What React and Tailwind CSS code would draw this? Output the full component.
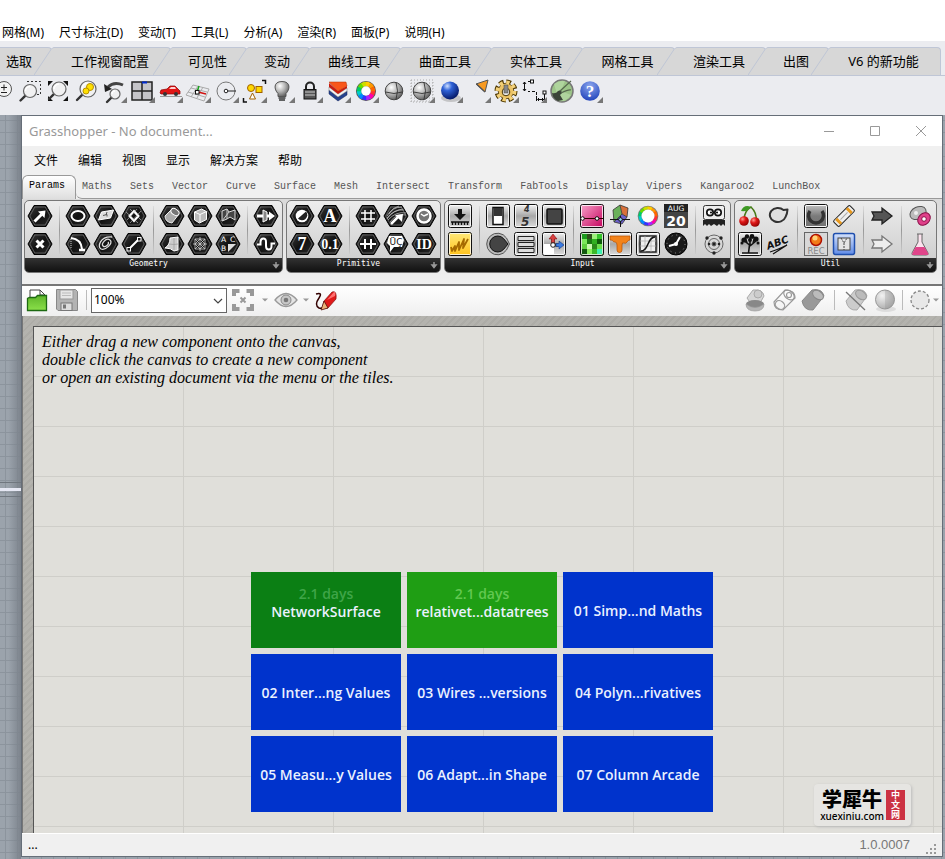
import React from "react";

const UI = "font-['Noto_Sans','Noto_Sans_CJK_SC',sans-serif]";

/* Gradients shared by the icon drawings. */
function Gradients() {
  return (
    <svg className="block h-0 w-0" aria-hidden="true">
      <defs>
        <linearGradient id="steel" x1="0" y1="0" x2="0" y2="1">
          <stop offset="0" stopColor="#f4f4f4" />
          <stop offset="0.5" stopColor="#a8a8a8" />
          <stop offset="1" stopColor="#dedede" />
        </linearGradient>
        <linearGradient id="dark" x1="0" y1="0" x2="0" y2="1">
          <stop offset="0" stopColor="#8a8a8a" />
          <stop offset="1" stopColor="#111" />
        </linearGradient>
        <linearGradient id="hex" x1="0" y1="0" x2="1" y2="1">
          <stop offset="0" stopColor="#3c3c3c" />
          <stop offset="0.5" stopColor="#111" />
          <stop offset="1" stopColor="#2c2c2c" />
        </linearGradient>
        <linearGradient id="pink" x1="0" y1="0" x2="1" y2="1">
          <stop offset="0" stopColor="#f9a4cb" />
          <stop offset="1" stopColor="#c4005c" />
        </linearGradient>
        <linearGradient id="yellow" x1="0" y1="0" x2="0" y2="1">
          <stop offset="0" stopColor="#ffe97a" />
          <stop offset="1" stopColor="#ffc21c" />
        </linearGradient>
        <linearGradient id="sky" x1="0" y1="0" x2="0" y2="1">
          <stop offset="0" stopColor="#d5e2fb" />
          <stop offset="1" stopColor="#5f8be8" />
        </linearGradient>
        <linearGradient id="green" x1="0" y1="0" x2="0" y2="1">
          <stop offset="0" stopColor="#5fb62b" />
          <stop offset="1" stopColor="#8be04a" />
        </linearGradient>
        <radialGradient id="ball" cx="0.35" cy="0.3" r="0.75">
          <stop offset="0" stopColor="#fff" />
          <stop offset="0.5" stopColor="#b5b5b5" />
          <stop offset="1" stopColor="#5a5a5a" />
        </radialGradient>
        <radialGradient id="paleBall" cx="0.35" cy="0.3" r="0.8">
          <stop offset="0" stopColor="#f2f2f2" />
          <stop offset="1" stopColor="#a8a8a8" />
        </radialGradient>
        <radialGradient id="blueBall" cx="0.35" cy="0.25" r="0.75">
          <stop offset="0" stopColor="#cfe0ff" />
          <stop offset="0.35" stopColor="#2f62d8" />
          <stop offset="1" stopColor="#061a6a" />
        </radialGradient>
        <radialGradient id="redBall" cx="0.35" cy="0.3" r="0.75">
          <stop offset="0" stopColor="#ff9a90" />
          <stop offset="0.4" stopColor="#e01818" />
          <stop offset="1" stopColor="#8d0000" />
        </radialGradient>
        <radialGradient id="helpBall" cx="0.5" cy="0.25" r="0.8">
          <stop offset="0" stopColor="#8ca6ee" />
          <stop offset="1" stopColor="#1c3fb8" />
        </radialGradient>
      </defs>
    </svg>
  );
}

const wheelColours = ["#f33", "#f0a", "#a2f", "#33f", "#08f", "#0cc", "#0c6", "#6d0", "#cd0", "#fc0", "#f90", "#f60"];

function Wheel({ r, width, ring }) {
  const step = (Math.PI * 2) / 12;
  return (
    <g>
      <circle cx="14" cy="14" r={r + width / 2 + 0.8} fill={ring} />
      {wheelColours.map((c, i) => {
        const a = i * step - 0.03;
        const b = a + step + 0.06;
        return (
          <path
            key={c}
            d={`M${14 + r * Math.cos(a)} ${14 + r * Math.sin(a)}A${r} ${r} 0 0 1 ${14 + r * Math.cos(b)} ${14 + r * Math.sin(b)}`}
            stroke={c}
            strokeWidth={width}
            fill="none"
          />
        );
      })}
      <circle cx="14" cy="14" r={r - width / 2} fill="#fff" />
    </g>
  );
}

function Lens({ x, y, r }) {
  return (
    <g>
      <path d={`M${x - r * 0.7} ${y + r * 0.7}L${x - r - 3} ${y + r + 3}`} stroke="#333" strokeWidth="2.4" strokeLinecap="round" />
      <circle cx={x} cy={y} r={r} fill="#f3f3f3" fillOpacity="0.8" stroke="#666" strokeWidth="1.2" />
      <path d={`M${x - r + 2} ${y}a${r - 2} ${r - 2} 0 0 1 ${r - 2} ${2 - r}`} stroke="#fff" strokeWidth="1.5" fill="none" />
    </g>
  );
}

const shadedSphere = (
  <g>
    <circle cx="14" cy="14" r="8.800" fill="url(#ball)" stroke="#444" />
    <path d="M5.500 15q8.500 3 17 0M16 5.500q3 8 0 17" stroke="#333" strokeWidth="0.900" fill="none" />
  </g>
);

/* Main toolbar: name, drawing, and whether the corner flyout mark is shown. */
const tools = [
  ["Zoom", <g><circle cx="16" cy="12" r="7.500" fill="#f3f3f3" stroke="#555" /><path d="M16 7.500v6M13 10.500h6M13 15.500h6" stroke="#222" /></g>, 0],
  ["Zoom window", <g><path d="M11 4.500h13.500v13h-4" fill="none" stroke="#333" strokeDasharray="2 2" /><Lens x={14} y={14} r={6.5} /></g>, 0],
  ["Zoom extents", <g><path d="M4 4h5l-5 5zM24 4h-5l5 5zM4 24h5l-5-5zM24 24h-5l5-5z" fill="#111" /><Lens x={15} y={12} r={7} /></g>, 0],
  ["Zoom selected", <g><Lens x={16} y={12} r={8} /><circle cx="18" cy="10" r="3.500" fill="#ffe000" stroke="#b89000" /><circle cx="14" cy="14" r="3" fill="#ffe000" stroke="#b89000" /></g>, 0],
  ["Undo view", <g><Lens x={15} y={17} r={5} /><path d="M8 10q6-6 15-2" fill="none" stroke="#444" strokeWidth="3" /><path d="M4 7l1 8 7-3z" fill="#222" /></g>, 1],
  ["Four viewports", <g><rect x="4" y="5" width="20" height="18" fill="#c4c4c8" stroke="#222" strokeWidth="1.500" /><path d="M14 5v18M4 14h20" stroke="#222" strokeWidth="1.500" /><path d="M14 5.500h5" stroke="#002bd0" strokeWidth="2" /></g>, 1],
  ["Right view", <g><path d="M4 19.500h22" stroke="#999" /><path d="M4 16l1-3 6-1 3-3h5l3 3 2 2v3H5z" fill="#e01515" stroke="#8a0000" strokeWidth="0.700" /><path d="M13 12l2-2h4l1 2z" fill="#ffd0d0" /><circle cx="9" cy="17" r="2" fill="#333" /><circle cx="20" cy="17" r="2" fill="#333" /></g>, 1],
  ["Construction plane", <g><path d="M2 18L9 8l16 4-5 12zM4 15l17 5M7 11l16 4M7 20L14 9M13 21l6-11" fill="none" stroke="#aaa" /><path d="M13 15l2-6" stroke="#16a01a" strokeWidth="1.500" /><path d="M14 15l8 2" stroke="#d01010" strokeWidth="1.500" /><rect x="11.500" y="13.500" width="3.500" height="3.500" fill="#fff" stroke="#111" /></g>, 1],
  ["Object snap", <g><circle cx="14" cy="14" r="9" fill="none" stroke="#777" /><path d="M14 14h10" stroke="#222" /><circle cx="14" cy="14" r="1.800" fill="#fff" stroke="#222" /></g>, 1],
  ["Select", <g><circle cx="11" cy="11" r="3.500" fill="#ffd800" stroke="#a06000" /><rect x="16" y="9.500" width="6" height="6" fill="#ffd800" stroke="#a06000" /><path d="M9.500 22l3-6 3 6z" fill="#fff" stroke="#a06000" /><path d="M22 3.500h3.500V7M3.500 21v4H7" fill="none" stroke="#111" strokeWidth="1.500" /></g>, 1],
  ["Hide", <g><path d="M14 4.500c-9 0-8 8-4 12v3h8v-3c4-4 5-12-4-12z" fill="url(#ball)" stroke="#555" /><path d="M10.500 21h7M11 23h6" stroke="#333" strokeWidth="1.500" /></g>, 1],
  ["Lock", <g><path d="M10 13V9.500a4 4 0 0 1 8 0V13" fill="none" stroke="#222" strokeWidth="2" /><rect x="8" y="12.500" width="12" height="9.500" fill="#555" stroke="#111" /><path d="M9 15h10M9 18h10" stroke="#ccc" /></g>, 1],
  ["Layers", <g><path d="M5 13l9 7 9-6v4l-9 6-9-7z" fill="#26428f" stroke="#132456" strokeWidth="0.500" /><path d="M5 10l9 7 9-6v3l-9 6-9-7z" fill="#f4f4f4" stroke="#777" strokeWidth="0.500" /><path d="M5 6l9 8 9-5v2l-9 6-9-7z" fill="#c81c10" /><path d="M5 5L22 5 23 9 14 14z" fill="#f9561a" stroke="#b03000" strokeWidth="0.500" /></g>, 1],
  ["Colour", <Wheel r={7} width={4.5} ring="#555" />, 1],
  ["Shade", shadedSphere, 0],
  ["Ghosted", <g><path d="M3 3h22v22H3zM3 6h22M3 9h22M3 12h22M3 15h22M3 18h22M3 21h22M3 24h22" fill="none" stroke="#aaa" strokeDasharray="1 2" />{shadedSphere}</g>, 1],
  ["Render", <g><ellipse cx="15" cy="21" rx="10" ry="4" fill="#aaa" opacity="0.600" /><circle cx="14" cy="13.500" r="9" fill="url(#blueBall)" /></g>, 1],
  ["Spotlight", <g><path d="M12 7l12-4-3 12z" fill="#f79a22" stroke="#555" /><path d="M12.500 7l8.500 8" stroke="#555" strokeWidth="1.300" /></g>, 1],
  ["Options", <g><circle cx="14" cy="14" r="9" fill="none" stroke="#4b3500" strokeWidth="5" strokeDasharray="4.500 2.570" /><circle cx="14" cy="14" r="7.800" fill="#ecc365" stroke="#4b3500" strokeWidth="0.800" /><circle cx="14" cy="14" r="8.600" fill="none" stroke="#f3d078" strokeWidth="3.800" strokeDasharray="3.300 3.450" /><circle cx="14" cy="14" r="6.500" fill="#ecc365" /><circle cx="14" cy="15" r="3.800" fill="#eee" stroke="#4b3500" /><path d="M12 8h4v8h-4z" fill="#888" stroke="#444" strokeWidth="0.500" /></g>, 1],
  ["Dimension", <g fill="none" stroke="#111"><path d="M8 4.500h3M4.500 5v9M3 7l1.500-2L6 7M3 12l1.500 2L6 12M8 14.500h2M12 14.500h3M16.500 15v3M16.500 19v5M18 22.500h6M19 21l-1.500 1.500L19 24M22 21l1.500 1.500L22 24M24.500 17v7" /><rect x="10.500" y="3" width="3" height="3" fill="#fff" /><rect x="23" y="14" width="3" height="3" fill="#fff" /></g>, 1],
  ["Grasshopper", <g><circle cx="14" cy="14" r="11" fill="#9cc488" stroke="#777" strokeWidth="1.500" /><path d="M6 7q5-4 11-3l-4 10 10 4q-5 7-12 6z" fill="#b8dca6" opacity="0.700" /><path d="M4 16q4 1 6-2l3-1 1 3-2 2 3 5-5 1q-5-2-6-8z" fill="#3b4438" /><path d="M12 14L23 4M13 16q8-4 10-3" stroke="#56684d" strokeWidth="1.200" fill="none" /></g>, 0],
  ["Help", <g><circle cx="14" cy="14" r="9.800" fill="url(#helpBall)" /><text x="14" y="20" textAnchor="middle" fontSize="17" fontWeight="700" fontFamily="Liberation Serif" fill="#fff">?</text></g>, 1],
];

function Hex({ children }) {
  return (
    <g>
      <path d="M2 14L8 3.500h12L26 14l-6 10.500H8z" fill="url(#hex)" stroke="#000" />
      <path d="M3.800 14l5-9h10.400l5 9-5 9H8.800z" fill="none" stroke="#777" strokeWidth="0.700" />
      {children}
    </g>
  );
}

function Square({ fill = "url(#steel)", children }) {
  return (
    <g>
      <rect x="2.500" y="2.500" width="23" height="23" rx="2" fill={fill} stroke="#111" />
      <rect x="3.500" y="3.500" width="21" height="21" rx="1" fill="none" stroke="#fff" opacity="0.800" />
      {children}
    </g>
  );
}

const w = { fill: "none", stroke: "#fff", strokeWidth: 2 };
const thin = { fill: "none", stroke: "#ccc", strokeWidth: 1 };
const glyph = { textAnchor: "middle", fill: "#fff", fontWeight: 700, fontFamily: "Liberation Serif" };

const pixels = ["#1c9a1c", "#2f4f1a", "#9cf07a", "#35c22a", "#7be85a", "#1a7a12", "#30b020", "#0f5a0a", "#5fd040", "#c8f8b0", "#2a8a1a", "#6be04c", "#145a10", "#8cf060", "#3cb82a", "#3ef0b0"];

const panels = [
  {
    name: "Geometry",
    columns: [
      [["Point", <Hex><path d="M8.500 19.500l7-7" {...w} strokeWidth="3" /><path d="M12 9.500l7.500-1-1 7.500z" fill="#fff" /></Hex>],
       ["Cross", <Hex><path d="M10.500 10.500l7 7M17.500 10.500l-7 7" {...w} strokeWidth="3" /></Hex>]],
      null,
      [["Circle", <Hex><ellipse cx="14" cy="14" rx="6.500" ry="5" {...w} /></Hex>],
       ["Arc", <Hex><path d="M7 8q10 1 11 11" {...w} /><path d="M15 20h6" {...w} strokeWidth="2.500" /><path d="M7 9v10" {...thin} strokeDasharray="1 1" /></Hex>]],
      [["Plane", <Hex><path d="M6.500 18l3-8 12-2-3 8z" fill="#ddd" stroke="#fff" /><path d="M11 13.500l4-1v2M15 10l-1 3" stroke="#555" fill="none" /></Hex>],
       ["Curve", <Hex><path d="M20 7C8 6 5 17 9 19s13-6 9-9-9 4-7 6 7-2 5-4" fill="none" stroke="#ddd" strokeWidth="1.300" /></Hex>]],
      [["Rectangle", <Hex><path d="M9.500 14l4.500-5 4.500 5-4.500 5z" {...w} /><path d="M6 10l12 11M10 21L21 9M10 7l11 11M7 18L17 7" {...thin} strokeWidth="0.600" /></Hex>],
       ["Line", <Hex><path d="M9 19L19 9" {...w} /><rect x="7" y="17.500" width="3.500" height="3.500" fill="#222" stroke="#fff" /><rect x="17.500" y="7.500" width="3.500" height="3.500" fill="#222" stroke="#fff" /></Hex>]],
      null,
      [["Brep", <Hex><path d="M7 14l7-7 7 5-7 9q-7-1-7-7z" fill="#aaa" stroke="#eee" /><ellipse cx="17" cy="10" rx="4.500" ry="3" transform="rotate(35 17 10)" fill="#777" stroke="#fff" /></Hex>],
       ["Surface", <Hex><path d="M7 18q5-3 5-10l8-1v13l-4 1q-3-3-9-3z" fill="#ccc" stroke="#fff" /><path d="M11 14q5 1 9 0M16 8v12" stroke="#999" strokeWidth="0.700" fill="none" /></Hex>]],
      [["Box", <Hex><path d="M8.500 10l7-3 5 2.500v8l-7 3.500-5-3z" fill="#bbb" stroke="#fff" /><path d="M8.500 10l5.500 2.500v8M14 12.500l6.500-3" stroke="#fff" fill="none" /></Hex>],
       ["Mesh", <Hex><path d="M9 9h10v10H9zM14 7v14M7 14h14M9 9l10 10M19 9L9 19M14 9l5 5-5 5-5-5z" {...thin} strokeWidth="0.800" /></Hex>]],
      [["Twisted box", <Hex><path d="M8 19V9l5-2 2 3 6-2v10l-5-3-3 2z" fill="#444" stroke="#ddd" /><path d="M13 7v10M8 19l7-9" {...thin} /></Hex>],
       ["Group", <Hex><g fontSize="7.500" fontFamily="DejaVu Sans" fill="#fff"><text x="7" y="12">A</text><text x="16" y="12">C</text><text x="7" y="21">B</text></g><path d="M14 14h8l-8 8z" fill="#ddd" /></Hex>]],
      null,
      [["Transform", <Hex><path d="M5 14h14" {...w} strokeWidth="3" /><path d="M17 9.500l6 4.500-6 4.500z" fill="#fff" /><path d="M11 8v12l4-2V10z" fill="#888" stroke="#fff" /></Hex>],
       ["Field", <Hex><path d="M5 14.500h3.500V12q0-3.500 2.800-3.500T14 12v4q0 3.500 2.800 3.500T19.500 16v-2.500H23" {...w} /></Hex>]],
    ],
  },
  {
    name: "Primitive",
    columns: [
      [["Boolean", <Hex><circle cx="14" cy="14" r="6.300" fill="#fff" /><path d="M18 9.500a5 5 0 0 1-8 7z" fill="#222" /></Hex>],
       ["Integer", <Hex><text x="14" y="20" fontSize="18" {...glyph}>7</text></Hex>]],
      [["Text", <Hex><text x="14" y="20" fontSize="18" {...glyph}>A</text></Hex>],
       ["Number", <Hex><text x="14" y="19" fontSize="14" {...glyph}>0.1</text></Hex>]],
      null,
      [["Domain", <Hex><path d="M11 8v12M17 8v12M7 11h14M7 17h14" {...w} strokeWidth="1.500" /></Hex>],
       ["Range", <Hex><path d="M6 14h16M11 9v10M17 9v10" {...w} /></Hex>]],
      [["Vector", <Hex><path d="M5 14q5-9 15-9M5 16q7-9 17-8M6 18q8-9 18-7M7 12q4-7 10-8M5 17q6-9 16-10M8 20q6-9 16-7" {...thin} strokeWidth="0.700" /><path d="M9 22l8-8" {...w} strokeWidth="2.500" /><path d="M13 13l8-1-1 8z" fill="#fff" /></Hex>],
       ["Culture", <Hex><path d="M7 6h13l2 4-2 7h-8l-4 5v-6l-3-3z" fill="#fff" /><text x="14" y="15" textAnchor="middle" fontSize="9" fontFamily="DejaVu Sans" fill="#111">ÜÇ</text></Hex>]],
      [["Time", <Hex><circle cx="14" cy="14" r="6.500" fill="#777" stroke="#fff" strokeWidth="2.500" /><path d="M11 12l3 2 4-2" {...w} strokeWidth="1.500" /></Hex>],
       ["Identifier", <Hex><text x="14" y="19" fontSize="14" {...glyph}>ID</text></Hex>]],
    ],
  },
  {
    name: "Input",
    columns: [
      [["Bake", <Square><path d="M12 7h4v5h4l-6 6-6-6h4z" fill="#111" /><path d="M5 20h18M6.500 20v3M9.500 20v3M12.500 20v3M15.500 20v3M18.500 20v3M21.500 20v3" stroke="#111" strokeWidth="1.500" /></Square>],
       ["Graph", <Square fill="url(#yellow)"><path d="M5 17l1 4 3-5 0 5 4-9 0 8 5-11-1 9 5-9" fill="none" stroke="#a66a00" strokeWidth="1.800" strokeLinejoin="round" /></Square>]],
      null,
      [["Toggle", <Square><rect x="9" y="5.500" width="10" height="17" fill="#fff" stroke="#111" strokeWidth="1.500" /><rect x="10" y="6" width="8" height="8" fill="#333" /></Square>],
       ["Knob", <g><path d="M25.500 14l-3-6a10.800 10.800 0 1 0 0 12z" fill="#bbb" stroke="#555" /><path d="M24 14l-4.500-5.500a8 8 0 1 0 0 11z" fill="#444" stroke="#111" /></g>]],
      [["Digit scroller", <Square><g fill="#333" fontFamily="DejaVu Sans" fontWeight="700" fontStyle="italic"><text x="12" y="10" fontSize="8">4</text><text x="9" y="24" fontSize="12">5</text></g></Square>],
       ["Value list", <Square><path d="M6 6.500h16v4H6zM6 12.500h16v4H6zM6 18.500h16v4H6z" fill="#ddd" stroke="#222" /></Square>]],
      [["Button", <Square><rect x="7" y="7" width="15" height="15" rx="1" fill="#444" stroke="#111" strokeWidth="1.500" /></Square>],
       ["Control", <Square><path d="M4 14h10v10H4z" fill="#fff" /><path d="M13 13V9M13 15h5" stroke="#333" strokeWidth="3" /><path d="M9 9l4-5 4 5h-2.500v4h-3V9z" fill="#d84040" stroke="#700" strokeWidth="0.500" /><path d="M16 13.500h3V11l5 4-5 4v-2.500h-3z" fill="#3d7ce0" stroke="#00277a" strokeWidth="0.500" /><circle cx="13" cy="15" r="2.300" fill="#fff" stroke="#222" /></Square>]],
      null,
      [["Gradient", <Square fill="url(#pink)"><path d="M3 16.500h22" stroke="#300" /><circle cx="4.500" cy="16.500" r="1.800" fill="#fff" stroke="#111" /><circle cx="19" cy="16.500" r="1.800" fill="#fff" stroke="#111" /></Square>],
       ["Image sampler", <Square fill="#2a8a1a">{pixels.map((c, i) => <rect key={i} x={4 + (i % 4) * 5} y={4 + Math.floor(i / 4) * 5} width="5" height="5" fill={c} />)}</Square>]],
      [["Colour swatch", <g><path d="M7 8l7-5 2 9-8 8z" fill="#6ab05a" /><path d="M14 3l8 3-1 9-5-3z" fill="#d8703a" /><path d="M8 20l8-8 5 3-5 7z" fill="#6a60c8" /><path d="M7 8l7-5 8 3-1 9-5 7-8-2zM14 3l2 9-8 8M16 12l5 3" stroke="#333" strokeWidth="0.800" fill="none" /><path d="M4 17.500h20M14.500 14v11" stroke="#111" /><circle cx="14.500" cy="17.500" r="1.800" fill="#9df" stroke="#111" /></g>],
       ["Paint", <Square><path d="M4 6h20v4q-2 0-3 2t-3 1-2 2v5a2.500 2.500 0 0 1-5 0v-5q0-3-2-3t-2-1-3-1z" fill="#f2831b" stroke="#b85200" strokeWidth="0.700" /></Square>]],
      [["Colour wheel", <Wheel r={8} width={3} ring="#777" />],
       ["Graph mapper", <Square><rect x="6" y="6" width="16" height="16" fill="#eee" stroke="#222" strokeWidth="1.500" /><path d="M6 11h16M6 16h16M11 6v16M17 6v16" stroke="#aaa" strokeWidth="0.700" /><path d="M7 21c8 0 6-14 14-14" fill="none" stroke="#111" strokeWidth="1.500" /></Square>]],
      [["Calendar", <g><rect x="2" y="2" width="24" height="24" fill="#222" /><rect x="2" y="10" width="24" height="16" fill="#444" /><g textAnchor="middle" fill="#fff" fontFamily="DejaVu Sans"><text x="14" y="9" fontSize="7.500">AUG</text><text x="14" y="23.500" fontSize="14" fontWeight="700">20</text></g></g>],
       ["Clock", <g><circle cx="14" cy="14" r="11" fill="#1a1a1a" stroke="#000" /><circle cx="14" cy="14" r="9" fill="none" stroke="#999" strokeDasharray="1 3.710" /><path d="M14 14l4-7M14 14l-7 2" {...w} /><circle cx="14" cy="14" r="2" fill="#fff" /></g>]],
      null,
      [["File", <g><rect x="3.500" y="3.500" width="21" height="14" rx="2" fill="#eee" stroke="#333" /><circle cx="10" cy="10.500" r="3.200" fill="#fff" stroke="#111" strokeWidth="1.700" /><circle cx="18" cy="10.500" r="3.200" fill="#fff" stroke="#111" strokeWidth="1.700" /><circle cx="11" cy="10.500" r="1" /><circle cx="17" cy="10.500" r="1" /><path d="M3 18h22v6l-2-2-2 2-2-2-2 2-3-2-3 2-2-2-2 2-2-2-2 2z" fill="#222" /></g>],
       ["Atom", <g fill="none" stroke="#666"><circle cx="14" cy="14" r="9" /><circle cx="14" cy="14" r="5.500" /><circle cx="14" cy="14" r="2" fill="#222" /><g fill="#222" stroke="none"><circle cx="7" cy="8" r="1.700" /><circle cx="21" cy="8" r="1.700" /><circle cx="14" cy="23" r="1.700" /><circle cx="9" cy="14" r="1.300" /><circle cx="19" cy="14" r="1.300" /></g></g>]],
    ],
  },
  {
    name: "Util",
    columns: [
      [["Cherry picker", <g><path d="M8 17Q9 8 15 5q6 6 5 13" fill="none" stroke="#4a7a1a" strokeWidth="1.500" /><path d="M15 5q-7-3-10 4 7 1 10-4z" fill="#3f9a25" /><circle cx="8" cy="19" r="4.800" fill="url(#redBall)" /><circle cx="19" cy="20" r="4.800" fill="url(#redBall)" /></g>],
       ["Param viewer", <Square><path d="M12.500 23l1-8-5-4M14 16l6-5M14 15V7M11 13L9 7M17 13l2-6M6 23h16" stroke="#111" strokeWidth="1.600" fill="none" /><g fill="#111"><circle cx="8" cy="10" r="2.600" /><circle cx="11" cy="6.500" r="2.200" /><circle cx="16" cy="6.500" r="2.400" /><circle cx="20" cy="9" r="2.600" /><circle cx="6" cy="13" r="1.500" /><circle cx="22" cy="13" r="1.500" /><circle cx="14" cy="10" r="2" /></g></Square>]],
      [["Data dam", <g><path d="M23.500 7.500l-4 .5A8 7 0 1 0 21.500 15q1.800-3 2-7.500z" fill="#e0e0e0" stroke="#333" strokeWidth="2" strokeLinejoin="round" /></g>],
       ["Scribble", <g><text x="14" y="16" textAnchor="middle" fontSize="10" fontWeight="700" fontStyle="italic" fontFamily="DejaVu Sans" fill="#111" transform="rotate(-20 14 14)">ABC</text><path d="M6 22q7-2 17-7l-14 9" stroke="#111" strokeWidth="1.300" fill="none" /></g>]],
      null,
      [["Relay", <Square><rect x="4" y="4" width="20" height="20" fill="url(#dark)" opacity="0.500" /><path d="M8 9a7.500 7.500 0 1 0 12 0" fill="none" stroke="#333" strokeWidth="3.500" /></Square>],
       ["Record", <g><rect x="2.500" y="2.500" width="23" height="23" fill="#d8d8d8" stroke="#666" /><circle cx="14" cy="10" r="5.500" fill="#f27a18" stroke="#b01000" strokeWidth="1.500" /><circle cx="13" cy="8" r="2.500" fill="#ffd27a" /><text x="14" y="24" textAnchor="middle" fontSize="8.500" fontFamily="DejaVu Sans" fill="#888">REC</text></g>]],
      [["Jump", <g transform="rotate(45 14 14)"><rect x="10" y="2.500" width="8" height="23" rx="1.500" fill="#eee" stroke="#222" /><path d="M10.500 6.500h7M10.500 21.500h7" stroke="#e89a20" strokeWidth="3" /><path d="M14 9v10" stroke="#aaa" /></g>],
       ["Cluster", <g><rect x="3.500" y="3.500" width="21" height="21" rx="2" fill="url(#sky)" stroke="#1f4fae" strokeWidth="1.500" /><rect x="8" y="8" width="12" height="12" fill="#e4e4e4" stroke="#444" /><path d="M11 8l3 5 3-5M14 13v7" fill="none" stroke="#444" strokeDasharray="2 1" /></g>]],
      null,
      [["Input arrow", <path d="M4 10h10V6l10 8-10 8v-4H4l2-4z" fill="#555" stroke="#222" strokeWidth="1.300" />],
       ["Output arrow", <path d="M4 10h10V6l10 8-10 8v-4H4l2-4z" fill="#eee" stroke="#777" strokeWidth="1.300" />]],
      null,
      [["Fitness", <g><ellipse cx="12" cy="11" rx="8.500" ry="6" transform="rotate(-25 12 11)" fill="#bbb" stroke="#555" /><ellipse cx="18" cy="17" rx="7" ry="5.500" transform="rotate(-45 18 17)" fill="#e0408a" stroke="#8a1148" /><circle cx="18" cy="17" r="2.300" fill="#fff" stroke="#8a1148" /><circle cx="10" cy="11" r="2" fill="#eee" /></g>],
       ["Galapagos", <g><path d="M11 4h6M12 4v8L6 23q-1 2 2 2h12q3 0 2-2l-6-11V4" fill="#fbe3ee" stroke="#666" /><path d="M9.500 17h9l4 7q0 1-2 1h-13q-2 0-1-2z" fill="#e0458a" /></g>]],
    ],
  },
];

function IconButton({ label, children }) {
  return (
    <button type="button" aria-label={label} className="block h-7 w-7 shrink-0">
      <svg viewBox="0 0 28 28" className="block h-7 w-7" aria-hidden="true">{children}</svg>
    </button>
  );
}

function Panel({ panel }) {
  return (
    <section className="shrink-0 overflow-hidden rounded-[5px] border border-[#777] bg-linear-to-b from-[#ececec] to-[#c9c9c9]">
      <div className="flex pt-px pr-0.5 pl-px">
        {panel.columns.map((column, i) =>
          column ? (
            <div key={i} className="flex flex-col">
              {column.map(([label, art]) => <IconButton key={label} label={label}>{art}</IconButton>)}
            </div>
          ) : (
            <div key={i} className="flex w-2.5 justify-center py-1">
              <div className="w-px bg-linear-to-b from-[#ddd] via-[#999] to-[#ccc]" />
            </div>
          )
        )}
      </div>
      <div className="flex h-3.5 items-center bg-linear-to-b from-[#333] to-[#111] pr-0.5 font-['DejaVu_Sans_Mono',monospace] text-[8px] leading-3 text-white">
        <h2 className="flex-1 pb-0.5 text-center">{panel.name}</h2>
        <button type="button" aria-label={`Expand ${panel.name}`} className="h-2 w-2">
          <svg viewBox="0 0 8 8" className="block h-2 w-2"><path d="M4 1v4M2 4h4L4 6.500z" fill="#999" stroke="#999" strokeWidth="1.500" /></svg>
        </button>
      </div>
    </section>
  );
}

const rhinoMenus = ["网格(M)", "尺寸标注(D)", "变动(T)", "工具(L)", "分析(A)", "渲染(R)", "面板(P)", "说明(H)"];
const rhinoTabs = [
  ["工作视窗配置", "w-[117px]"],
  ["可见性", "w-[74px]"],
  ["变动", "w-[61px]"],
  ["曲线工具", "w-[89px]"],
  ["曲面工具", "w-[89px]"],
  ["实体工具", "w-[89px]"],
  ["网格工具", "w-[90px]"],
  ["渲染工具", "w-[89px]"],
  ["出图", "w-[61px]"],
  ["V6 的新功能", "w-[110px]"],
];
const menus = ["文件", "编辑", "视图", "显示", "解决方案", "帮助"];
const categories = ["Maths", "Sets", "Vector", "Curve", "Surface", "Mesh", "Intersect", "Transform", "FabTools", "Display", "Vipers", "Kangaroo2", "LunchBox"];
const tiles = [
  ["NetworkSurface", "2.1 days", "bg-[#0b7f14]", "text-[#3fa548]"],
  ["relativet...datatrees", "2.1 days", "bg-[#1f9e14]", "text-[#62c850]"],
  ["01 Simp...nd Maths"],
  ["02 Inter...ng Values"],
  ["03 Wires ...versions"],
  ["04 Polyn...rivatives"],
  ["05 Measu...y Values"],
  ["06 Adapt...in Shape"],
  ["07 Column Arcade"],
];

function RhinoHeader() {
  return (
    <header className="overflow-hidden bg-[#ebecf0]">
      <nav className="flex h-[41px] items-end gap-[15px] bg-white pl-0.5 text-[12px] leading-4">
        {rhinoMenus.map((m) => <button key={m} type="button" className="shrink-0 whitespace-nowrap">{m}</button>)}
      </nav>
      <div className="flex h-[35px] items-end border-b border-[#bfc6d6] text-[13px] leading-[26px]">
        <button type="button" className="h-7 w-[52px] shrink-0 rounded-tr-[4px] border-t border-r border-[#bfc6d6] bg-[#d7d7d7] pb-px pl-1.5 text-left">选取</button>
        {rhinoTabs.map(([name, width]) => (
          <button key={name} type="button" className="-ml-[18px] flex h-7 shrink-0">
            <svg viewBox="0 0 20 28" className="block h-7 w-5" aria-hidden="true">
              <path d="M0 28L17 2.500Q18.500 0.500 20 0.500V28z" fill="#d7d7d7" />
              <path d="M0 28L17 2.500Q18.500 0.500 20 0.500" fill="none" stroke="#bfc6d6" />
            </svg>
            <span className={`${width} block h-7 rounded-tr-[4px] border-t border-r border-[#bfc6d6] bg-[#d7d7d7] pr-1 text-center whitespace-nowrap`}>{name}</span>
          </button>
        ))}
      </div>
      <div className="-ml-3 flex h-[39px] pt-px">
        {tools.map(([label, art, flyout]) => (
          <IconButton key={label} label={label}>
            {art}
            {flyout ? <path d="M27 20v6h-6z" fill="#777" /> : null}
          </IconButton>
        ))}
      </div>
    </header>
  );
}

function TitleBar() {
  return (
    <div className="flex h-[30px] items-center bg-white pr-1.5 pl-[7px]">
      <h1 className="flex-1 text-[13px] leading-4 text-[#999]">Grasshopper - No document...</h1>
      {[["Minimise", "M9 14.500h10"], ["Maximise", "M9.500 9.500h9v9h-9z"], ["Close", "M9 9l10 10M19 9L9 19"]].map(([label, d]) => (
        <button key={label} type="button" aria-label={label} className="flex w-[46px] justify-center last:-mr-2">
          <svg viewBox="0 0 28 28" className="block h-7 w-7"><path d={d} fill="none" stroke="#999" /></svg>
        </button>
      ))}
    </div>
  );
}

const caret = <svg viewBox="0 0 8 8" className="block h-2 w-2" aria-hidden="true"><path d="M1 2.500h6L4 5.500z" fill="#999" /></svg>;

function CanvasToolbar() {
  return (
    <div className="flex h-8 items-center border-t-2 border-[#777] bg-linear-to-b from-white to-[#efefef] pb-0.5">
      <IconButton label="Open"><path d="M8 11V4h10l5 5v6" fill="#fff" stroke="#444" /><path d="M18 4v5h5" fill="none" stroke="#444" /><path d="M5.500 24.500v-12l2-1h6l2-2h9v15z" fill="url(#green)" stroke="#1d6a12" strokeWidth="1.300" /></IconButton>
      <div className="w-0.5" />
      <IconButton label="Save"><path d="M4.500 3.500h19l2 2v19H6l-1.500-1.500z" fill="#b3b3b3" stroke="#888" /><rect x="8" y="4" width="13" height="9" fill="#e6e6e6" stroke="#999" /><path d="M10 7h9M10 9.500h9" stroke="#bbb" /><rect x="9" y="17" width="11" height="7.500" fill="#ddd" stroke="#777" /><rect x="11" y="18.500" width="3" height="4" fill="#777" /></IconButton>
      <div className="mr-1 ml-1.5 h-5 w-px bg-[#bbb]" />
      <div className="relative h-[25px] w-[136px]">
        <select aria-label="Zoom level" defaultValue="100%" className="block h-[25px] w-full appearance-none border border-[#666] bg-white pl-0.5 text-[12px] text-black">
          <option>100%</option>
        </select>
        <svg viewBox="0 0 10 10" className="pointer-events-none absolute top-2 right-1 h-2.5 w-2.5" aria-hidden="true"><path d="M1 3l4 4 4-4" fill="none" stroke="#444" strokeWidth="1.200" /></svg>
      </div>
      <div className="ml-0.5 flex items-center">
        <IconButton label="Zoom extents"><path d="M5 10V5h5.500M17.500 5H23v5M23 18v5h-5.500M10.500 23H5v-5" fill="none" stroke="#999" strokeWidth="4" /><path d="M11.500 11.500l5 5M16.500 11.500l-5 5" stroke="#999" strokeWidth="2" /></IconButton>
        <button type="button" aria-label="Zoom options" className="ml-1 mr-[3px]">{caret}</button>
        <IconButton label="Preview"><path d="M3 14q11-13 22 0-11 13-22 0z" fill="#e4e4e4" stroke="#999" strokeWidth="1.300" /><circle cx="14" cy="14" r="5" fill="#c6c6c6" stroke="#888" /><circle cx="14" cy="14" r="2.300" fill="#777" /></IconButton>
        <button type="button" aria-label="Preview options" className="mx-0.5">{caret}</button>
        <IconButton label="Sketch"><path d="M4 8q7-2 3 4-5 7 0 10 5 1 6-3" fill="none" stroke="#300" strokeWidth="1.500" /><path d="M10 23l2-8 8-9q5-2 4 7l-8 9z" fill="#e01a1a" stroke="#801010" strokeWidth="0.700" /><path d="M15 14l7-8q2 0 1 4z" fill="#ff7070" /><path d="M9 24l3-9 4 7z" fill="#e9b37a" stroke="#400" strokeWidth="0.700" /></IconButton>
      </div>
      <div className="ml-auto flex items-center gap-px">
        <IconButton label="Wire preview off"><path d="M6 12l6-8q10-1 11 6l-4 7q-9 3-13-5z" fill="#d6d6d6" stroke="#aaa" /><circle cx="17" cy="8" r="4" fill="#ccc" stroke="#aaa" /><ellipse cx="14" cy="18" rx="9" ry="4" fill="#888" /><path d="M5 18q0 7 9 7t9-7q-9 7-18 0z" fill="#b5b5b5" stroke="#999" strokeWidth="0.700" /></IconButton>
        <IconButton label="Wireframe preview"><g fill="none" stroke="#999" strokeWidth="1.200"><path d="M4 16L15 4q10 0 10 8L13 24q-9 0-9-8z" /><ellipse cx="19" cy="9" rx="6" ry="4" transform="rotate(40 19 9)" /><ellipse cx="10" cy="19" rx="5" ry="4" transform="rotate(40 10 19)" /><circle cx="19" cy="9" r="2.500" /></g></IconButton>
        <IconButton label="Shaded preview"><path d="M3 15L13 4q10-2 12 6L14 24q-9 1-11-9z" fill="#999" stroke="#888" /><ellipse cx="19" cy="9" rx="6" ry="4" transform="rotate(35 19 9)" fill="#bbb" stroke="#888" /></IconButton>
        <div className="mx-1.5 h-5 w-px bg-[#bbb]" />
        <IconButton label="Selected preview"><path d="M4 15L13 4q10-2 12 6L15 24q-9 1-11-9z" fill="#ccc" stroke="#aaa" /><ellipse cx="19" cy="9" rx="6" ry="4" transform="rotate(35 19 9)" fill="#bbb" stroke="#999" /><path d="M4 6l19 18" stroke="#777" strokeWidth="1.300" /></IconButton>
        <IconButton label="Preview quality"><ellipse cx="15" cy="23" rx="10" ry="3" fill="#ddd" /><circle cx="14" cy="13.500" r="9.500" fill="url(#paleBall)" stroke="#999" /><path d="M14 4v19a9.500 9.500 0 0 0 0-19z" fill="#888" opacity="0.250" /></IconButton>
        <div className="mx-0.5 h-5 w-px bg-[#bbb]" />
        <IconButton label="Selection"><circle cx="14" cy="14" r="9" fill="#e8e8e8" stroke="#888" strokeWidth="1.300" strokeDasharray="3 2" /></IconButton>
        <button type="button" aria-label="Selection options" className="mr-0.5 -ml-[3px]">{caret}</button>
      </div>
    </div>
  );
}

function Watermark() {
  return (
    <div className="absolute right-[31px] bottom-[7px] flex items-center gap-0.5 rounded bg-[#e6e5e2] px-1.5 py-1 shadow-[1px_1px_3px_#bbb]">
      <div className="flex flex-col text-center text-black">
        <span className="font-['Noto_Sans_CJK_SC',sans-serif] text-[20px] leading-[22px] font-black">学犀牛</span>
        <span className="text-[10px] leading-[12px] font-medium">xuexiniu.com</span>
      </div>
      <div className="flex h-[30px] w-[19px] flex-col items-center justify-center bg-[#cc3344] text-[9px] leading-[10px] font-bold text-white">
        <span>中</span><span>文</span><span>网</span>
      </div>
    </div>
  );
}

function Canvas() {
  return (
    <main className="relative flex flex-1 flex-col border-l border-[#777] bg-[repeating-linear-gradient(135deg,#adaca7_0_2px,#b4b3ae_2px_5px)] pt-2.5 pl-2.5">
      <div className="flex flex-1 flex-col border-t border-l border-[#555] bg-[#e0dfda] bg-[linear-gradient(to_right,#cfcec9_1px,transparent_1px),linear-gradient(to_bottom,#cfcec9_1px,transparent_1px)] bg-[size:150px_50px] bg-[position:-1px_-1px]">
        <p className="pt-1.5 pl-2 font-['Liberation_Serif',serif] text-[16px] leading-[18px] text-black italic">
          Either drag a new component onto the canvas,<br />
          double click the canvas to create a new component<br />
          or open an existing document via the menu or the tiles.
        </p>
        <div className="mt-auto mr-3 mb-[21px] grid grid-cols-[150px_150px_150px] justify-center gap-1.5">
          {tiles.map(([name, age, bg = "bg-[#0033cc]", ageColour]) => (
            <button key={name} type="button" className={`${bg} flex h-[76px] flex-col items-center justify-center pt-0.5 font-['Open_Sans',sans-serif] text-[14px] leading-[18px] font-semibold whitespace-nowrap text-[#eaf1ff]`}>
              {age && <span className={ageColour}>{age}</span>}
              <span className={age ? "mb-4" : ""}>{name}</span>
            </button>
          ))}
        </div>
      </div>
      <Watermark />
    </main>
  );
}

export default function App() {
  return (
    <div className={`${UI} flex min-h-screen flex-col overflow-hidden bg-[#9ba3ac] text-black`}>
      <Gradients />
      <RhinoHeader />
      <div className="flex flex-1 bg-[linear-gradient(to_right,#8c949d_1px,transparent_1px),linear-gradient(to_bottom,#8c949d_1px,transparent_1px)] bg-[size:12px_12px] bg-[position:5px_5px]">
        <div className="flex w-[21px] shrink-0 flex-col justify-center bg-linear-to-r from-transparent from-40% to-[#7c838c] pt-1">
          <div className="h-[15px] border-y border-[#70777f] py-[5px]"><div className="h-[3px] bg-[#e6e8f4]" /></div>
        </div>
        <div className="mr-0.5 mb-0.5 flex flex-1 flex-col border border-[#666e78] bg-[#f0f0f0]">
          <TitleBar />
          <nav className="flex h-[29px] items-center gap-5 pl-3 text-[12px] leading-4">
            {menus.map((m) => <button key={m} type="button">{m}</button>)}
          </nav>
          <div className="flex h-6 font-['Liberation_Mono',monospace] text-[10px] leading-4 text-[#555]">
            <button type="button" className="w-[54px] shrink-0 rounded-t-md border border-b-0 border-[#999] bg-linear-to-b from-white to-[#dedede] pr-1 pb-1 text-black">Params</button>
            <div className="flex flex-1 items-center gap-[18px] rounded-bl-md border-b border-[#999] pl-1.5">
              {categories.map((c) => <button key={c} type="button">{c}</button>)}
            </div>
          </div>
          <div className="flex items-start gap-[3px] bg-linear-to-b from-[#dadada] to-[#f0f0f0] pt-px pb-[11px] pl-0.5">
            {panels.map((p) => <Panel key={p.name} panel={p} />)}
          </div>
          <CanvasToolbar />
          <Canvas />
          <footer className="flex h-[23px] items-center border-t border-white bg-[#f0f0f0] pr-1 pl-1.5 text-[12px] leading-4">
            <span className="flex-1">...</span>
            <span className="font-['Liberation_Sans',sans-serif] text-[13px] text-[#777]">1.0.0007</span>
            <svg viewBox="0 0 12 12" className="ml-4 h-3 w-3 self-end" aria-hidden="true"><path d="M8 0h2v2H8zM4 4h2v2H4zM8 4h2v2H8zM0 8h2v2H0zM4 8h2v2H4zM8 8h2v2H8z" fill="#999" /></svg>
          </footer>
        </div>
      </div>
    </div>
  );
}
